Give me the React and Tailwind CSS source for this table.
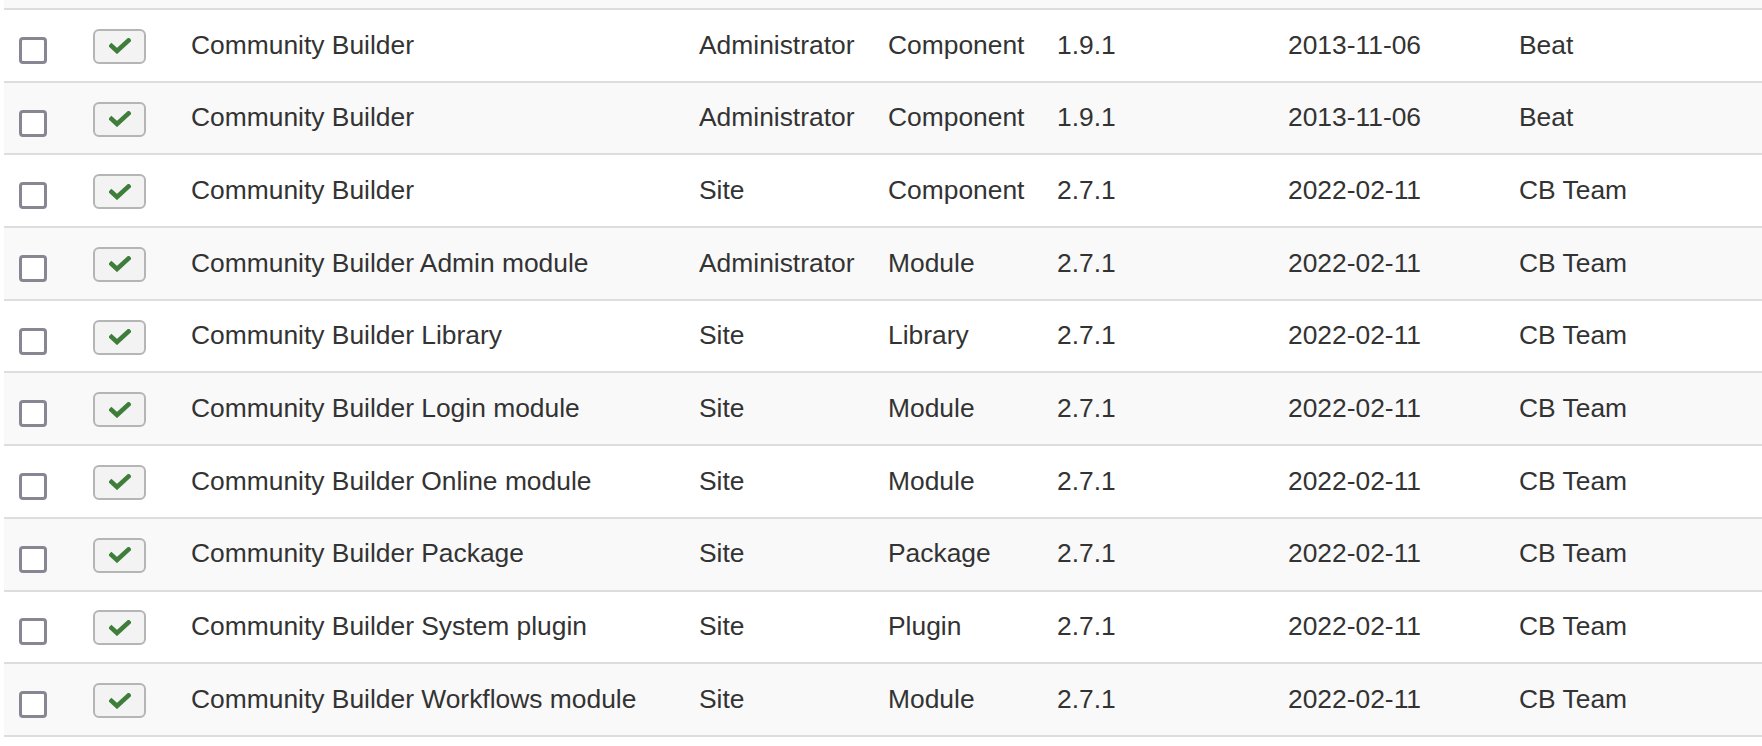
import React from "react";

const rows = [
  ["Community Builder", "Administrator", "Component", "1.9.1", "2013-11-06", "Beat"],
  ["Community Builder", "Administrator", "Component", "1.9.1", "2013-11-06", "Beat"],
  ["Community Builder", "Site", "Component", "2.7.1", "2022-02-11", "CB Team"],
  ["Community Builder Admin module", "Administrator", "Module", "2.7.1", "2022-02-11", "CB Team"],
  ["Community Builder Library", "Site", "Library", "2.7.1", "2022-02-11", "CB Team"],
  ["Community Builder Login module", "Site", "Module", "2.7.1", "2022-02-11", "CB Team"],
  ["Community Builder Online module", "Site", "Module", "2.7.1", "2022-02-11", "CB Team"],
  ["Community Builder Package", "Site", "Package", "2.7.1", "2022-02-11", "CB Team"],
  ["Community Builder System plugin", "Site", "Plugin", "2.7.1", "2022-02-11", "CB Team"],
  ["Community Builder Workflows module", "Site", "Module", "2.7.1", "2022-02-11", "CB Team"],
];

function Check() {
  return (
    <svg width="22" height="16" viewBox="0 0 22 16">
      <polyline
        points="2.5,8 8,13 19.5,2.5"
        fill="none"
        stroke="#3f7e3a"
        strokeWidth="4.6"
        strokeLinecap="square"
        strokeLinejoin="miter"
      />
    </svg>
  );
}

export default function App() {
  return (
    <div className="w-[1762px] h-[746px] bg-white overflow-hidden font-['Liberation_Sans',Arial,sans-serif] text-[26.4px] text-[#333]">
      <div className="ml-[4px]">
        <div className="h-[10px] bg-[#f9f9f9] border-b-2 border-[#dddddd]" />
        {rows.map((r, i) => (
          <div
            key={i}
            className={`grid grid-cols-[70px_98px_508px_189px_169px_231px_231px_1fr] items-center h-[72.7px] border-b-2 border-[#dddddd] ${
              i % 2 === 1 ? "bg-[#f9f9f9]" : "bg-white"
            }`}
          >
            <div className="pl-[15px] mt-[10px]">
              <div className="w-[28px] h-[27px] border-[3px] border-[#878793] rounded-[4px] bg-white" />
            </div>
            <div className="pl-[19px] mt-[2px]">
              <div className="w-[53px] h-[35px] border-2 border-[#b5b5b5] rounded-[6px] bg-[#f3f3f3] flex items-center justify-center">
                <Check />
              </div>
            </div>
            <div className="pl-[19px] whitespace-nowrap">{r[0]}</div>
            <div className="pl-[19px] whitespace-nowrap">{r[1]}</div>
            <div className="pl-[19px] whitespace-nowrap">{r[2]}</div>
            <div className="pl-[19px] whitespace-nowrap">{r[3]}</div>
            <div className="pl-[19px] whitespace-nowrap">{r[4]}</div>
            <div className="pl-[19px] whitespace-nowrap">{r[5]}</div>
          </div>
        ))}
      </div>
    </div>
  );
}
